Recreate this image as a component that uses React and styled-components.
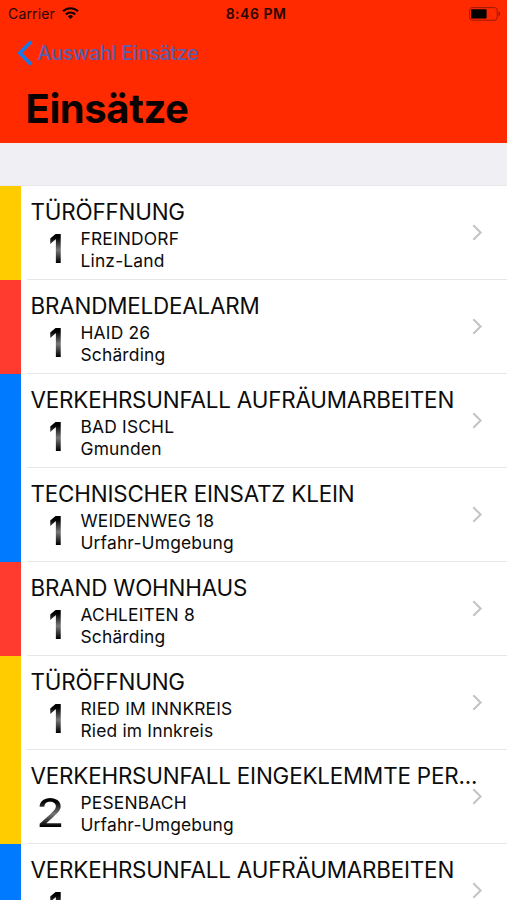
import React from "react";
import styled, { createGlobalStyle } from "styled-components";

const incidents = [
  { title: "TÜRÖFFNUNG", place: "FREINDORF", district: "Linz-Land", count: 1, color: "#ffcc00" },
  { title: "BRANDMELDEALARM", place: "HAID 26", district: "Schärding", count: 1, color: "#ff3b30" },
  { title: "VERKEHRSUNFALL AUFRÄUMARBEITEN", place: "BAD ISCHL", district: "Gmunden", count: 1, color: "#007aff" },
  { title: "TECHNISCHER EINSATZ KLEIN", place: "WEIDENWEG 18", district: "Urfahr-Umgebung", count: 1, color: "#007aff" },
  { title: "BRAND WOHNHAUS", place: "ACHLEITEN 8", district: "Schärding", count: 1, color: "#ff3b30" },
  { title: "TÜRÖFFNUNG", place: "RIED IM INNKREIS", district: "Ried im Innkreis", count: 1, color: "#ffcc00" },
  { title: "VERKEHRSUNFALL EINGEKLEMMTE PER...", place: "PESENBACH", district: "Urfahr-Umgebung", count: 2, color: "#ffcc00" },
  { title: "VERKEHRSUNFALL AUFRÄUMARBEITEN", place: "", district: "", count: 1, color: "#007aff" },
];

function WifiIcon() {
  return (
    <svg width="17" height="12" viewBox="0 0 17 12" fill="none" stroke="#160300" strokeWidth="2.2">
      <path d="M1 4.3a10.8 10.8 0 0 1 15 0" />
      <path d="M3.8 7.4a6.8 6.8 0 0 1 9.4 0" />
      <path d="M8.5 12 5.9 9.4a3.7 3.7 0 0 1 5.2 0z" fill="#160300" stroke="none" />
    </svg>
  );
}

function BatteryIcon() {
  return (
    <svg width="32" height="14" viewBox="0 0 32 14">
      <rect x="0.6" y="0.6" width="27.6" height="12.6" rx="2.6" fill="none" stroke="#9c1a00" strokeWidth="1" />
      <rect x="2" y="2.2" width="15.6" height="9.4" rx="1" fill="#000" />
      <path d="M29.6 4.6c1.8.6 1.8 4 0 4.6z" fill="#7d1400" />
    </svg>
  );
}

function App() {
  return (
    <Screen>
      <GlobalStyle />
      <Header>
        <StatusBar>
          <Carrier>
            <span>Carrier</span>
            <WifiIcon />
          </Carrier>
          <Time>8:46 PM</Time>
          <Battery>
            <BatteryIcon />
          </Battery>
        </StatusBar>
        <BackButton>
          <svg width="16" height="26" viewBox="0 0 16 26" fill="none" stroke="#1878ea" strokeWidth="3.6">
            <path d="M14.2 1.5 2.8 13l11.4 11.5" />
          </svg>
          <span>Auswahl Einsätze</span>
        </BackButton>
        <Heading>Einsätze</Heading>
      </Header>
      <SectionGap />
      <List>
        {incidents.map((item, index) => (
          <Row key={index}>
            <Stripe $color={item.color} />
            <Content>
              <Info>
                <Title>{item.title}</Title>
                <Details>
                  <Count $narrow={item.count === 1}>{item.count}</Count>
                  <Location>
                    <span>{item.place}</span>
                    <span>{item.district}</span>
                  </Location>
                </Details>
              </Info>
              <Chevron width="11" height="17" viewBox="0 0 11 17">
                <path d="M1.3 1.3 8.6 8.5l-7.3 7.2" />
              </Chevron>
            </Content>
          </Row>
        ))}
      </List>
    </Screen>
  );
}

const GlobalStyle = createGlobalStyle`
  body {
    margin: 0;
    overflow: hidden;
    background: #fff;
  }
  * {
    box-sizing: border-box;
  }
`;

const Screen = styled.div`
  width: 507px;
  height: 900px;
  overflow: hidden;
  background: #fff;
  color: #0c0c0c;
  font-family: Inter, "Liberation Sans", sans-serif;
`;

const Header = styled.header`
  height: 142.6px;
  background: #ff2a00;
`;

const StatusBar = styled.div`
  display: grid;
  grid-template-columns: 1fr auto 1fr;
  align-items: center;
  height: 27px;
  padding: 0 6px 0 8px;
  font-size: 14px;
  line-height: 27px;
  color: #2a0600;
`;

const Carrier = styled.div`
  display: flex;
  align-items: center;
  gap: 7px;
  letter-spacing: 0.15px;
  svg {
    margin-top: -1px;
  }
`;

const Time = styled.div`
  padding-left: 3px;
  font-weight: 600;
  letter-spacing: 0.5px;
`;

const Battery = styled.div`
  display: flex;
  justify-content: flex-end;
`;

const BackButton = styled.div`
  display: flex;
  align-items: center;
  gap: 5px;
  height: 52px;
  padding-left: 16.5px;
  color: #5b5fae;
  font-size: 19.6px;
  font-weight: 500;
  letter-spacing: -0.23px;
`;

const Heading = styled.h1`
  margin: 0;
  padding-left: 25.5px;
  color: #0a0200;
  font-size: 40px;
  font-weight: 700;
  letter-spacing: -0.4px;
  line-height: 60px;
`;

const SectionGap = styled.div`
  height: 43px;
  background: #efeff4;
  border-bottom: 1px solid #e8e8ec;
`;

const List = styled.div`
  display: flex;
  flex-direction: column;
`;

const Row = styled.div`
  display: flex;
  height: 94.03px;
`;

const Stripe = styled.div`
  flex: none;
  width: 20.5px;
  background: ${(props) => props.$color};
`;

const Content = styled.div`
  display: flex;
  flex: 1;
  align-items: center;
  min-width: 0;
  margin-left: 6px;
  padding-right: 24px;
  border-bottom: 1px solid #e6e6e8;
`;

const Info = styled.div`
  flex: 1;
  align-self: stretch;
  min-width: 0;
  padding: 12px 0 0 4px;
`;

const Title = styled.div`
  font-size: 22.4px;
  line-height: 28px;
  letter-spacing: -0.18px;
  white-space: nowrap;
`;

const Details = styled.div`
  display: flex;
  gap: 18px;
`;

const Count = styled.div`
  width: ${(props) => (props.$narrow ? 32 : 33)}px;
  height: 46px;
  margin-right: ${(props) => (props.$narrow ? 0 : -1)}px;
  background: linear-gradient(to bottom, #000 25%, #777 52%, #000 80%);
  background-clip: text;
  -webkit-background-clip: text;
  color: transparent;
  font-size: 40px;
  font-weight: ${(props) => (props.$narrow ? 700 : 500)};
  line-height: 46px;
  text-align: right;
  transform: scaleX(${(props) => (props.$narrow ? 0.82 : 1.12)});
  transform-origin: right center;
`;

const Location = styled.div`
  display: flex;
  flex-direction: column;
  padding-top: 2px;
  font-size: 17.4px;
  line-height: 22px;
  letter-spacing: 0.18px;
`;

const Chevron = styled.svg`
  flex: none;
  fill: none;
  stroke: #c4c4c8;
  stroke-width: 2.1;
`;

export default App;
